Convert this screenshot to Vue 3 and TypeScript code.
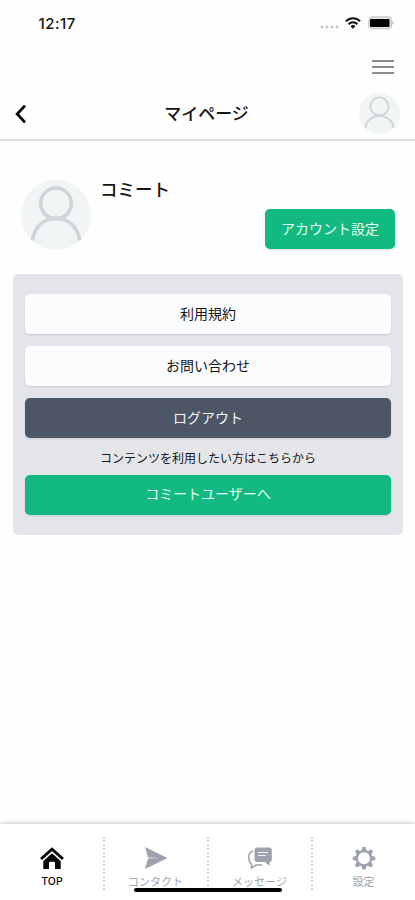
<script setup lang="ts">
interface MenuItem {
  label: string
  kind: 'light' | 'dark'
}

interface Tab {
  id: 'top' | 'contact' | 'message' | 'settings'
  label: string
}

const userName = 'コミート'
const menuItems: MenuItem[] = [
  { label: '利用規約', kind: 'light' },
  { label: 'お問い合わせ', kind: 'light' },
  { label: 'ログアウト', kind: 'dark' },
]
const tabs: Tab[] = [
  { id: 'top', label: 'TOP' },
  { id: 'contact', label: 'コンタクト' },
  { id: 'message', label: 'メッセージ' },
  { id: 'settings', label: '設定' },
]
const teeth = [0, 45, 90, 135, 180, 225, 270, 315]
</script>

<template>
  <div class="screen">
    <div class="status">
      <span class="time">12:17</span>
      <div class="indicators">
        <svg class="signal" width="20" height="14" viewBox="0 0 20 14" fill="#c4c4c4">
          <circle cx="2" cy="11" r="1.4" />
          <circle cx="7" cy="11" r="1.4" />
          <circle cx="12" cy="11" r="1.4" />
          <circle cx="17" cy="11" r="1.4" />
        </svg>
        <svg class="wifi" width="16" height="14" viewBox="0 0 16 14" fill="none" stroke="#111" stroke-width="2">
          <path d="M.9 5.2C4.8 1.1 11.2 1.1 15.1 5.2" />
          <path d="M3.6 8.2C6 5.7 10 5.7 12.4 8.2" />
          <path d="M5.5 10.2Q8 8 10.5 10.2L8 12.8Z" fill="#111" stroke="none" />
        </svg>
        <svg class="battery" width="27" height="14" viewBox="0 0 27 14">
          <rect x=".8" y=".8" width="22.6" height="12" rx="3" fill="#e2e2e2" stroke="#c4c4c4" />
          <rect x="2" y="3" width="19.5" height="8" rx="1" fill="#050505" />
          <path d="M24.5 4.5Q26.8 6.8 24.5 9Z" fill="#aaa" />
        </svg>
      </div>
    </div>

    <div class="tools">
      <button class="burger" aria-label="メニュー"><i></i><i></i><i></i></button>
    </div>

    <header class="header">
      <button class="back" aria-label="戻る">
        <svg width="12" height="20" viewBox="0 0 12 20" fill="none" stroke="#080808" stroke-width="2.8">
          <path d="M10 1.6L2.2 10L10 18.4" />
        </svg>
      </button>
      <h1>マイページ</h1>
      <svg class="avatar-small" width="41" height="41" viewBox="0 0 70 70">
        <circle cx="35" cy="35" r="35" fill="#f2f5f6" />
        <g fill="none" stroke="#d0d4d6" stroke-width="3.2">
          <circle cx="35" cy="23" r="15.5" />
          <path d="M11 60C13 32 57 32 59 60" />
        </g>
      </svg>
    </header>

    <main>
      <section class="profile">
        <svg class="avatar" width="70" height="70" viewBox="0 0 70 70">
          <circle cx="35" cy="35" r="35" fill="#f2f5f6" />
          <g fill="none" stroke="#d0d4d6" stroke-width="3.6">
            <circle cx="35" cy="23.3" r="15.3" />
            <path d="M11.5 60.5C15 31 55 31 58.7 60.5" />
          </g>
        </svg>
        <div class="profile-body">
          <h2>{{ userName }}</h2>
          <button class="btn account">アカウント設定</button>
        </div>
      </section>

      <section class="panel">
        <div class="menu">
          <button v-for="item in menuItems" :key="item.label" class="btn" :class="item.kind">{{ item.label }}</button>
        </div>
        <p class="note">コンテンツを利用したい方はこちらから</p>
        <button class="btn green">コミートユーザーへ</button>
      </section>
    </main>

    <nav class="tabs">
      <a v-for="tab in tabs" :key="tab.id" class="tab" :class="{ active: tab.id === 'top' }">
        <svg v-if="tab.id === 'top'" width="26" height="24" viewBox="0 0 26 24">
          <path d="M2 13L13 3.2L24 13" fill="none" stroke="currentColor" stroke-width="3" stroke-linejoin="miter" />
          <path d="M4.3 15L13 7.3L21.7 15V23H16V17Q16 15.7 14.7 15.7H11.3Q10 15.7 10 17V23H4.3Z" fill="currentColor" />
        </svg>
        <svg v-else-if="tab.id === 'contact'" width="26" height="24" viewBox="0 0 26 24" fill="currentColor">
          <path d="M2 1L24.5 12L2 23L5 12.6L16 12.1L5 11.5Z" />
        </svg>
        <svg v-else-if="tab.id === 'message'" width="26" height="24" viewBox="0 0 26 24">
          <path d="M10.5 1.5H22Q24.8 1.5 24.8 4.3V13.2Q24.8 16 22.5 16V20L18 16H10.5Q7.5 16 7.5 13.2V4.3Q7.5 1.5 10.5 1.5Z" fill="currentColor" />
          <path d="M11 6.5H21M11 9.5H18.5" stroke="#f3f4f6" stroke-width="1.2" />
          <path d="M6 5Q1.8 6 1.8 11Q1.8 16.3 4.6 18L4.4 22L9 19H15" fill="none" stroke="currentColor" stroke-width="1.5" />
        </svg>
        <svg v-else width="26" height="24" viewBox="0 0 26 24">
          <g transform="translate(13 12.3)">
            <path v-for="angle in teeth" :key="angle" d="M-2.6 -7L-1.6 -11.3H1.6L2.6 -7Z" :transform="`rotate(${angle})`" fill="currentColor" />
            <circle r="7.2" fill="#fff" stroke="currentColor" stroke-width="2.4" />
          </g>
        </svg>
        <span>{{ tab.label }}</span>
      </a>
      <div class="home-indicator"></div>
    </nav>
  </div>
</template>

<style>
body {
  background: #fff;
}
</style>

<style scoped>
* {
  box-sizing: border-box;
}
.screen {
  display: flex;
  flex-direction: column;
  width: 100%;
  height: 900px;
  overflow: hidden;
  background: #fefefe;
  color: #151515;
  font-family: "Noto Sans CJK JP", sans-serif;
  font-weight: 400;
}
h1, h2, p {
  margin: 0;
}
button {
  border: 0;
  padding: 0;
  background: none;
  color: inherit;
  font: inherit;
}
svg {
  display: block;
  flex: none;
}
.status {
  display: flex;
  justify-content: space-between;
  height: 46px;
  padding: 16px 20px 0 38.5px;
}
.time {
  font: 500 15px/15px Inter, sans-serif;
  letter-spacing: 0.5px;
}
.indicators {
  display: flex;
}
.wifi {
  margin-left: 5px;
}
.battery {
  margin-left: 7px;
}
.tools {
  display: flex;
  justify-content: flex-end;
  height: 47px;
  padding: 14px 21px 0 0;
}
.burger {
  display: flex;
  flex-direction: column;
  gap: 4px;
  width: 22px;
  height: 14px;
}
.burger i {
  flex: none;
  height: 2px;
  background: #8c8c8c;
}
.header {
  display: grid;
  grid-template-columns: 41px 1fr 41px;
  align-items: center;
  height: 48px;
  padding: 0 15px 5px;
  border-bottom: 2px solid #dedede;
}
.back {
  width: 12px;
}
h1 {
  padding: 0 2px 2px 0;
  text-align: center;
  font-size: 17px;
  line-height: 24px;
  font-weight: 500;
}
.profile {
  display: flex;
  gap: 9px;
  height: 133px;
  padding: 38px 20px 0 21px;
}
.avatar {
  margin-top: 1px;
}
.profile-body {
  display: flex;
  flex: 1;
  flex-direction: column;
}
h2 {
  height: 30px;
  font-size: 17.5px;
  line-height: 20px;
  font-weight: 500;
}
.btn {
  display: block;
  width: 100%;
  height: 40px;
  padding-bottom: 3px;
  border-radius: 5px;
  font-size: 14px;
  line-height: 36px;
  text-align: center;
  box-shadow: 0 1px 2px rgba(30, 40, 60, 0.14);
}
.account {
  align-self: flex-end;
  width: 130px;
}
.account, .green {
  background: #12b981;
  color: #e6fff5;
}
.panel {
  height: 261px;
  margin: 0 12px 0 13px;
  padding: 20px 12px;
  border-radius: 5px;
  background: #e4e5e9;
}
.menu {
  display: grid;
  gap: 12.2px;
}
.light {
  background: #fbfcfd;
}
.dark {
  background: #4c5665;
  color: #f0f4fa;
}
.note {
  height: 36.6px;
  text-align: center;
  font-size: 12px;
  line-height: 39px;
}
.tabs {
  position: relative;
  display: grid;
  grid-template-columns: repeat(4, 104px);
  height: 76px;
  margin-top: auto;
  padding-top: 13px;
  background: #fff;
  box-shadow: 0 -1px 4px rgba(0, 0, 0, 0.22);
}
.tab {
  display: flex;
  flex-direction: column;
  align-items: center;
  height: 53px;
  margin-left: -1px;
  padding: 9px 2px 0 0;
  color: #9ca3af;
}
.tab + .tab {
  border-left: 2px dotted #d4d4d4;
}
.tab span {
  margin-top: 3px;
  font-size: 11px;
  line-height: 16px;
}
.tab.active {
  margin-left: 0;
  padding-right: 0;
  color: #080808;
}
.tab.active span {
  padding-top: 1px;
  font-family: Inter, sans-serif;
  font-size: 10.5px;
  font-weight: 500;
}
.home-indicator {
  position: absolute;
  left: 134px;
  bottom: 8px;
  width: 148px;
  height: 4px;
  border-radius: 2px;
  background: #000;
}
</style>
